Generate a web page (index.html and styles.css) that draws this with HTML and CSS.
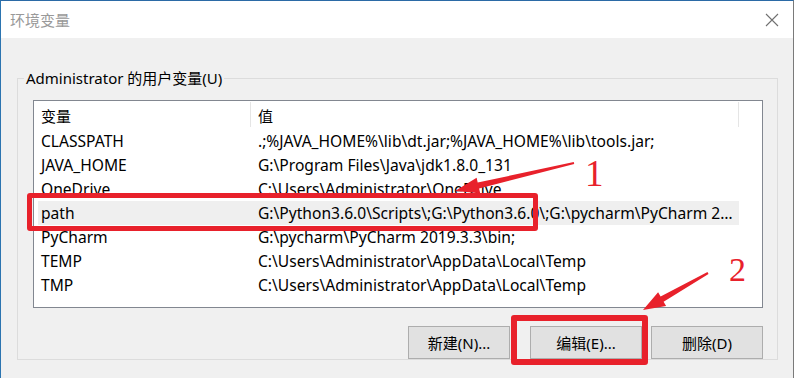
FILE: index.html
```html
<!DOCTYPE html>
<html lang="zh-CN">
<head>
<meta charset="utf-8">
<title>环境变量</title>
<link rel="stylesheet" href="styles.css">
</head>
<body>
<div class="win">
  <div class="titlebar">
    <span class="title">环境变量</span>
    <svg class="close" width="14" height="14" viewBox="0 0 14 14"><path d="M1 1L13 13M13 1L1 13" stroke="#707070" stroke-width="1.1" fill="none"/></svg>
  </div>
  <div class="body">
    <fieldset class="group">
      <legend>Administrator 的用户变量(U)</legend>
      <div class="list">
        <div class="row head"><div class="c1">变量</div><div class="c2">值</div></div>
        <div class="row"><div class="c1">CLASSPATH</div><div class="c2">.;%JAVA_HOME%\lib\dt.jar;%JAVA_HOME%\lib\tools.jar;</div></div>
        <div class="row"><div class="c1">JAVA_HOME</div><div class="c2">G:\Program Files\Java\jdk1.8.0_131</div></div>
        <div class="row"><div class="c1">OneDrive</div><div class="c2">C:\Users\Administrator\OneDrive</div></div>
        <div class="row sel"><div class="c1">path</div><div class="c2">G:\Python3.6.0\Scripts\;G:\Python3.6.0\;G:\pycharm\PyCharm 2…</div></div>
        <div class="row"><div class="c1">PyCharm</div><div class="c2">G:\pycharm\PyCharm 2019.3.3\bin;</div></div>
        <div class="row"><div class="c1">TEMP</div><div class="c2">C:\Users\Administrator\AppData\Local\Temp</div></div>
        <div class="row"><div class="c1">TMP</div><div class="c2">C:\Users\Administrator\AppData\Local\Temp</div></div>
      </div>
      <div class="buttons">
        <button class="btn b-new">新建(N)...</button>
        <button class="btn b-edit">编辑(E)...</button>
        <button class="btn b-del">删除(D)</button>
      </div>
    </fieldset>
  </div>

  <div class="mark mark-path"></div>
  <div class="mark mark-edit"></div>
  <span class="num num1">1</span>
  <span class="num num2">2</span>
  <svg class="arrows" width="794" height="378" viewBox="0 0 794 378">
    <polygon fill="#e8212b" points="573.8,162.0 477.7,182.6 476.6,177.7 455,191 480.2,193.3 479.1,188.4 574.2,164.0"/>
    <polygon fill="#e8212b" points="707.5,272.1 660.6,296.5 658.1,292.2 643,310 666.1,306.0 663.6,301.7 708.5,273.9"/>
  </svg>
</div>
</body>
</html>
```
FILE: styles.css
```css
html, body {
  margin: 0;
  padding: 0;
}
body {
  width: 794px;
  height: 378px;
  overflow: hidden;
  background: #f0f0f0;
  font-family: "Noto Sans", "Noto Sans CJK SC", sans-serif;
  font-size: 15px;
  color: #000;
}
.win {
  position: relative;
  width: 794px;
  height: 378px;
  box-sizing: border-box;
  border-top: 1px solid #2b6aa6;
  border-left: 1px solid #2b74b0;
  border-right: 1px solid #7a7a7a;
  background: #f0f0f0;
}
.titlebar {
  height: 37px;
  background: #fff;
  display: flex;
  align-items: center;
  justify-content: space-between;
  padding: 0 14px 0 9px;
}
.title {
  color: #999;
  font-size: 15px;
  line-height: 20px;
}
.close {
  display: block;
  margin-top: 1px;
}
.body {
  padding: 30px 15px 0 16px;
}
.group {
  margin: 0;
  border: 1px solid #dcdcdc;
  padding: 12px 14px 0 15px;
  width: 761px;
  box-sizing: border-box;
}
.group legend {
  padding: 0 2px;
  margin-left: -9px;
  line-height: 20px;
}
.list {
  width: 730px;
  height: 208px;
  box-sizing: border-box;
  border: 1px solid #828790;
  background: #fff;
  font-size: 15.6px;
}
.row {
  display: flex;
  height: 24px;
  line-height: 24px;
  margin-left: 4px;
  width: 701px;
}
.row.head {
  height: 28px;
  line-height: 28px;
  position: relative;
  font-size: 15px;
}
.c1 {
  width: 213px;
  padding-left: 3px;
  box-sizing: border-box;
  white-space: nowrap;
}
.c2 {
  width: 488px;
  padding: 0 6px 0 7px;
  box-sizing: border-box;
  white-space: nowrap;
  overflow: hidden;
}
.head .c1 {
  border-right: 1px solid #e5e5e5;
  height: 25px;
  margin-top: 1px;
  line-height: 28px;
}
.head .c2 {
  height: 25px;
  margin-top: 1px;
  line-height: 28px;
}
.head::after {
  content: "";
  position: absolute;
  left: 700px;
  top: 1px;
  width: 1px;
  height: 25px;
  background: #e5e5e5;
}
.sel {
  background: #efefef;
}
.buttons {
  display: flex;
  justify-content: flex-end;
  margin-top: 18px;
  width: 730px;
}
.btn {
  font-family: inherit;
  font-size: 15px;
  height: 33px;
  background: #e1e1e1;
  border: 1px solid #adadad;
  padding: 0;
  color: #000;
}
.b-new { width: 102px; }
.b-edit { width: 112px; margin-left: 20px; }
.b-del { width: 112px; margin-left: 9px; }

.mark {
  position: absolute;
  border: 5px solid #e8212b;
  border-radius: 3px;
  box-sizing: border-box;
}
.mark-path {
  left: 26px;
  top: 192px;
  width: 511px;
  height: 38px;
}
.mark-edit {
  left: 510px;
  top: 314px;
  width: 137px;
  height: 50px;
  border-width: 6px;
}
.num {
  position: absolute;
  font-family: "Liberation Serif", serif;
  color: #e8212b;
  line-height: 1;
}
.num1 {
  left: 584px;
  top: 154px;
  font-size: 37px;
}
.num2 {
  left: 728px;
  top: 252px;
  font-size: 34px;
}
.arrows {
  position: absolute;
  left: -1px;
  top: -1px;
  pointer-events: none;
}
```
